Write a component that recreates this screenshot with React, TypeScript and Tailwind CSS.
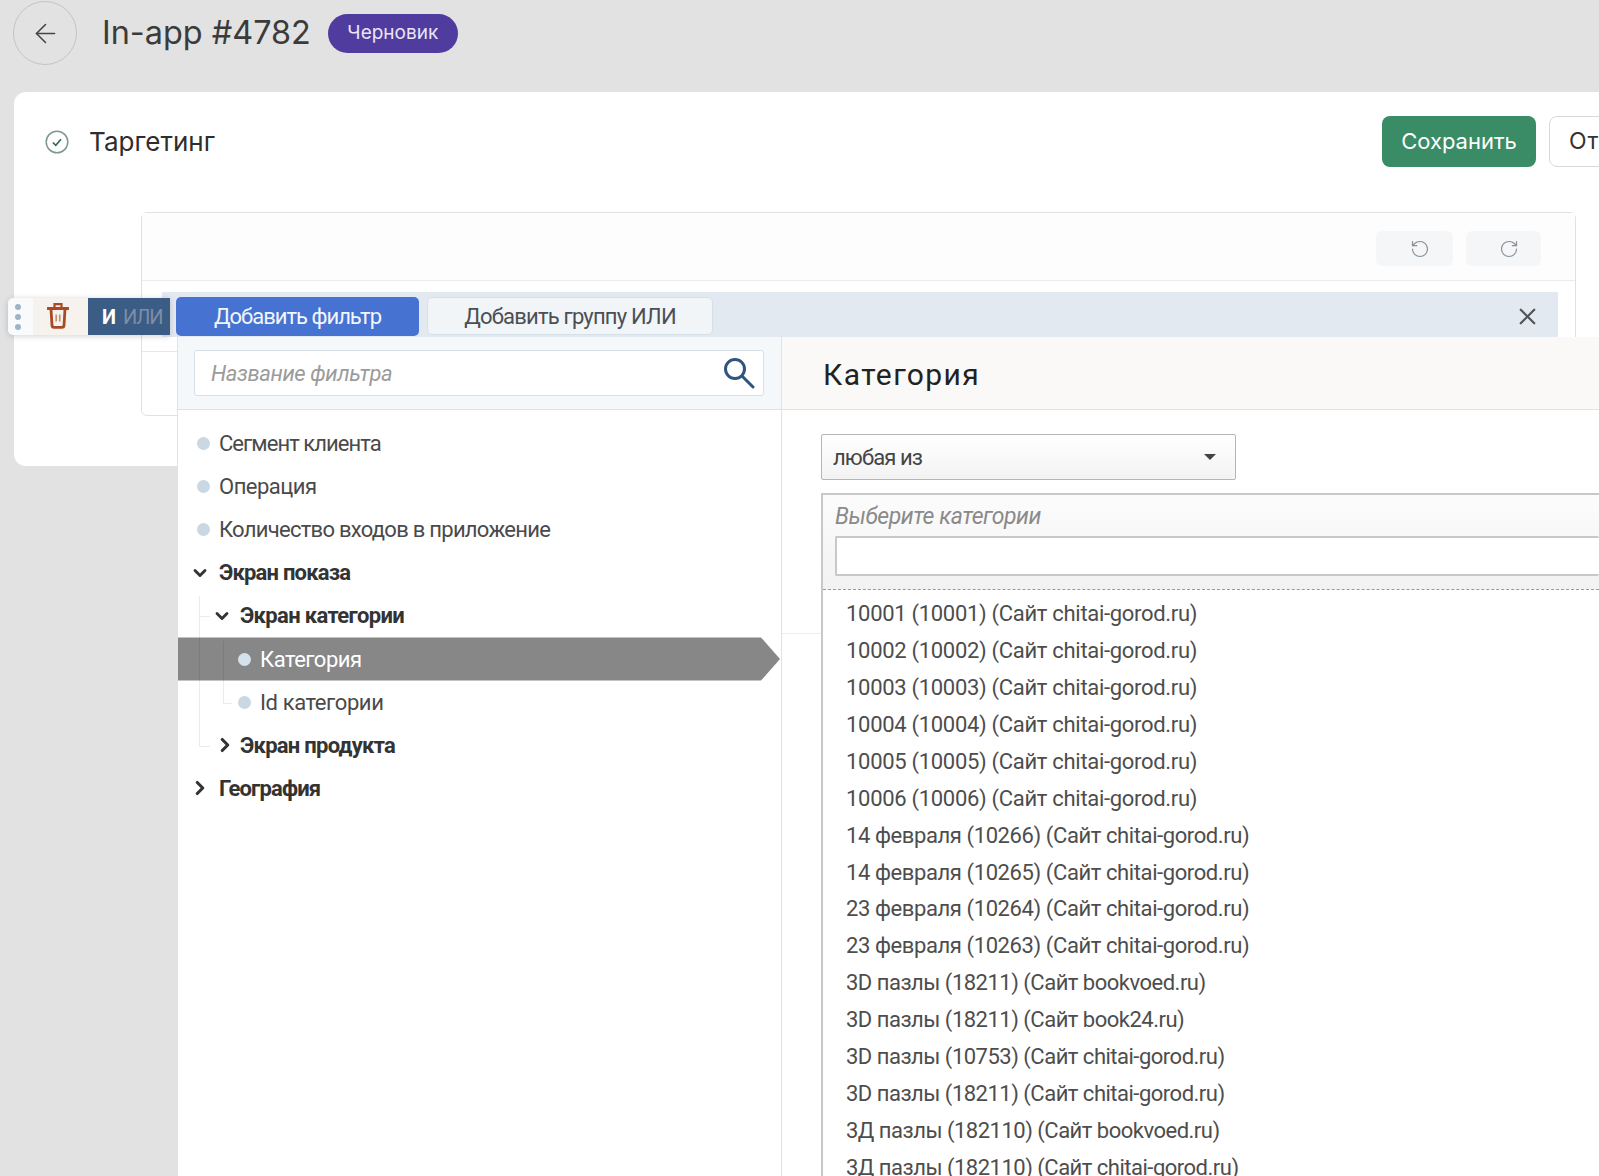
import { ArrowLeft, ChevronDown, ChevronRight, RotateCcw, RotateCw, X } from "lucide-react";

const categories = [
  "10001 (10001) (Сайт chitai-gorod.ru)",
  "10002 (10002) (Сайт chitai-gorod.ru)",
  "10003 (10003) (Сайт chitai-gorod.ru)",
  "10004 (10004) (Сайт chitai-gorod.ru)",
  "10005 (10005) (Сайт chitai-gorod.ru)",
  "10006 (10006) (Сайт chitai-gorod.ru)",
  "14 февраля (10266) (Сайт chitai-gorod.ru)",
  "14 февраля (10265) (Сайт chitai-gorod.ru)",
  "23 февраля (10264) (Сайт chitai-gorod.ru)",
  "23 февраля (10263) (Сайт chitai-gorod.ru)",
  "3D пазлы (18211) (Сайт bookvoed.ru)",
  "3D пазлы (18211) (Сайт book24.ru)",
  "3D пазлы (10753) (Сайт chitai-gorod.ru)",
  "3D пазлы (18211) (Сайт chitai-gorod.ru)",
  "3Д пазлы (182110) (Сайт bookvoed.ru)",
  "3Д пазлы (182110) (Сайт chitai-gorod.ru)",
];

function Dot({ light }: { light?: boolean }) {
  return <span className={`mr-[9px] h-[13px] w-[13px] shrink-0 rounded-full ${light ? "bg-[#d3e2ec]" : "bg-[#c9d8e3]"}`} />;
}

function Leaf({ label, className }: { label: string; className: string }) {
  return (
    <div className={`flex h-[43.1px] items-center pl-[19px] text-[#4a4a4a] ${className}`}>
      <Dot />
      {label}
    </div>
  );
}

function TreeLines() {
  return (
    <>
      <span className="absolute left-[21px] top-[186px] h-[150px] w-px bg-[#e6ecf2]" />
      <span className="absolute left-[21px] top-[206px] h-px w-[11px] bg-[#e6ecf2]" />
      <span className="absolute left-[21px] top-[336px] h-px w-[11px] bg-[#e6ecf2]" />
      <span className="absolute left-[45px] top-[231px] h-[62px] w-px bg-[#e6ecf2]" />
      <span className="absolute left-[45px] top-[293px] h-px w-[9px] bg-[#e6ecf2]" />
    </>
  );
}

export default function App() {
  return (
    <div className="relative h-[1176px] overflow-hidden bg-[#e2e2e2] font-['Inter',sans-serif] text-[#333]">
      <div className="flex h-[92px] items-start pl-[13px] pt-px">
        <button className="flex h-[64px] w-[64px] items-center justify-center rounded-full border border-[#c4c4c4] text-[#444]">
          <ArrowLeft size={31} strokeWidth={1.2} />
        </button>
        <h1 className="ml-[25px] mt-[10px] text-[32.4px] leading-[44px] text-[#3b3b3b]">In-app #4782</h1>
        <span className="ml-[17px] mt-[13px] flex h-[39px] w-[130px] items-center justify-center rounded-full bg-[#4f3c9e] text-[19px] text-[#e8e6f5]">
          Черновик
        </span>
      </div>

      <div className="ml-[14px] h-[374px] overflow-hidden rounded-l-[12px] bg-white pt-[24px]">
        <div className="flex h-[51px] items-center">
          <svg className="ml-[31px] h-[24px] w-[24px]" viewBox="0 0 24 24" fill="none" stroke="#7e9a8e" strokeWidth="1.5">
            <circle cx="12" cy="12" r="10.8" />
            <path d="M7.8 12.5l3 2.8 5.2-6" stroke="#2f6e55" strokeWidth="1.7" />
          </svg>
          <span className="ml-[20px] text-[26px] text-[#2e2e2e]">Таргетинг</span>
          <div className="ml-auto mr-[-80px] flex gap-[13px]">
            <button className="h-[51px] w-[154px] rounded-[8px] bg-[#3a8c66] text-[22px] text-white">Сохранить</button>
            <button className="h-[51px] w-[130px] rounded-[8px] border border-[#d5d9dd] bg-white pl-[19px] text-left text-[23px] tracking-[1px] text-[#333]">
              Отменить
            </button>
          </div>
        </div>
        <div className="ml-[127px] mr-[23px] mt-[45px] h-[204px] rounded-[6px] border border-[#dfe2e5]">
          <div className="flex h-[68px] items-center justify-end gap-[13px] border-b border-[#e9edf0] bg-[#fdfdfd] pr-[34px] pt-[4px]">
            <span className="flex h-[35px] w-[77px] items-center justify-center rounded-[6px] bg-[#f4f6f8] pl-[10px] text-[#8a8f93]">
              <RotateCcw size={20} strokeWidth={1.4} />
            </span>
            <span className="flex h-[35px] w-[75px] items-center justify-center rounded-[6px] bg-[#f4f6f8] pl-[10px] text-[#8a8f93]">
              <RotateCw size={20} strokeWidth={1.4} />
            </span>
          </div>
          <div className="h-[71px] border-b border-[#e6e9ec]" />
        </div>
      </div>

      {/* панель добавления фильтра поверх карточки */}
      <div className="absolute left-[8px] top-[298px] z-20 flex h-[37px] w-[162px] overflow-hidden rounded-l-[5px] shadow-[0_1px_6px_rgba(0,0,0,0.18)]">
        <div className="flex w-[25px] flex-col items-center justify-center gap-[4px] bg-[#f8fafb] pr-[5px]">
          <span className="h-[6px] w-[6px] rounded-full bg-[#9db4c6]" />
          <span className="h-[6px] w-[6px] rounded-full bg-[#9db4c6]" />
          <span className="h-[6px] w-[6px] rounded-full bg-[#9db4c6]" />
        </div>
        <div className="flex w-[55px] items-center justify-center bg-[#f6f2ee] pb-[3px] pr-[5px]">
          <svg width="22" height="27" viewBox="0 0 22 27" fill="none" stroke="#a84a24">
            <path d="M1 6.5h20" strokeWidth="3" strokeLinecap="round" />
            <path d="M7.5 5V2.2h7V5" strokeWidth="2.2" />
            <path d="M4 7l1 16.5a2 2 0 0 0 2 1.8h8a2 2 0 0 0 2-1.8L18 7" strokeWidth="2.8" />
            <path d="M9.2 12.5v7M12.8 12.5v7" stroke="#c9906f" strokeWidth="1.7" />
          </svg>
        </div>
        <div className="flex flex-1 items-center bg-[#3b5c85] pl-[14px] font-['Roboto',sans-serif] text-[20px]">
          <span className="font-bold text-white">И</span>
          <span className="ml-[7px] tracking-[-1.2px] text-[#7d8ea5]">ИЛИ</span>
        </div>
      </div>

      <div className="absolute left-[162px] top-[292px] z-10 flex h-[45px] w-[1396px] items-start bg-[#e3e9f0] pl-[14px] pt-[5px] font-['Roboto',sans-serif] text-[22px]">
        <button className="h-[39px] w-[243px] rounded-[5px] bg-[#4673d1] tracking-[-1px] text-[#f2f5fc]">Добавить фильтр</button>
        <button className="ml-[8px] h-[38px] w-[286px] rounded-[5px] border border-[#d5e0e9] bg-[#f2f5f8] tracking-[-0.8px] text-[#4a4f55]">
          Добавить группу ИЛИ
        </button>
        <X className="ml-auto mr-[17px] mt-[6px] text-[#505559]" size={27} strokeWidth={2} />
      </div>

      <div className="absolute bottom-0 left-[177px] right-0 top-[337px] z-10 flex border-l border-[#dbe4ee] bg-white font-['Roboto',sans-serif] text-[22px] tracking-[-0.4px]">
        <div className="relative w-[604px] shrink-0 border-r border-[#dbe4ee]">
          <div className="flex h-[73px] items-center border-b border-[#dbe4ee] bg-[#f5f8fa] pl-[16px]">
            <div className="flex h-[46px] w-[570px] items-center justify-between rounded-[3px] border border-[#d5e0ea] bg-white pl-[16px] pr-[8px]">
              <span className="italic text-[#9b9b9b]">Название фильтра</span>
              <svg width="32" height="32" viewBox="0 0 32 32" fill="none" stroke="#2f5480" strokeWidth="3">
                <circle cx="12" cy="12" r="9.5" />
                <path d="M19 19l11 11" strokeLinecap="round" />
              </svg>
            </div>
          </div>
          <div className="relative pt-[12px]">
            <TreeLines />
            <Leaf label="Сегмент клиента" className="tracking-[-0.95px]" />
            <Leaf label="Операция" className="tracking-[-0.5px]" />
            <Leaf label="Количество входов в приложение" className="tracking-[-0.73px]" />
            <div className="flex h-[43.1px] items-center pl-[12px] font-bold tracking-[-0.8px] text-[#333]">
              <ChevronDown className="mr-[9px] shrink-0" size={20} strokeWidth={3.4} />
              Экран показа
            </div>
            <div className="flex h-[43.1px] items-center pl-[34px] font-bold tracking-[-0.65px] text-[#333]">
              <ChevronDown className="mr-[8px] shrink-0" size={20} strokeWidth={3.4} />
              Экран категории
            </div>
            <div className="flex h-[43.1px] items-center bg-black/47 pl-[60px] tracking-[-0.5px] text-white [clip-path:polygon(0_0,583px_0,602px_50%,583px_100%,0_100%)]">
              <Dot light />
              Категория
            </div>
            <div className="flex h-[43.1px] items-center pl-[60px] tracking-[-0.4px] text-[#4a4a4a]">
              <Dot />
              Id категории
            </div>
            <div className="flex h-[43.1px] items-center pl-[36px] font-bold tracking-[-0.73px] text-[#333]">
              <ChevronRight className="mr-[4px] shrink-0" size={22} strokeWidth={3.4} />
              Экран продукта
            </div>
            <div className="flex h-[43.1px] items-center pl-[11px] font-bold tracking-[-0.85px] text-[#333]">
              <ChevronRight className="mr-[8px] shrink-0" size={22} strokeWidth={3.4} />
              География
            </div>
          </div>
        </div>

        <div className="relative min-w-0 flex-1">
          <div className="flex h-[73px] items-center border-b border-[#dbe4ee] bg-[#faf9f7] pl-[41px] pt-[2px] text-[30px] tracking-[1.4px] text-[#222]">
            Категория
          </div>
          <span className="absolute left-0 top-[296px] h-px w-[39px] bg-[#eeeeee]" />
          <div className="pl-[39px] pt-[24px]">
            <div className="flex h-[46px] w-[415px] items-center justify-between rounded-[2px] border border-[#b5b5b5] bg-gradient-to-b from-white to-[#f3f3f3] pl-[11px] pr-[19px] tracking-[-0.9px] text-[#444]">
              любая из
              <span className="h-0 w-0 border-x-[6px] border-t-[6px] border-x-transparent border-t-[#444]" />
            </div>
            <div className="mt-[13px] border-l-2 border-t-2 border-[#c8c8c8]">
              <div className="h-[95px] border-b border-dashed border-[#999] bg-gradient-to-b from-[#fcfcfc] to-[#f2f2f2] pl-[12px]">
                <div className="flex h-[41px] items-center pt-[3px] text-[23px] italic tracking-[-0.45px] text-[#8a8a8a]">Выберите категории</div>
                <div className="h-[40px] rounded-[2px] border-2 border-r-0 border-[#c8c8c8] bg-white" />
              </div>
              <div className="pl-[23px] pt-[5px] text-[#4d4d4d]">
                {categories.map((c) => (
                  <div
                    key={c}
                    className={`flex h-[36.95px] items-center ${c.includes("пазлы") ? "tracking-[-0.5px]" : c.startsWith("1000") ? "tracking-[-0.3px]" : ""}`}
                  >
                    {c}
                  </div>
                ))}
              </div>
            </div>
          </div>
        </div>
      </div>
    </div>
  );
}
